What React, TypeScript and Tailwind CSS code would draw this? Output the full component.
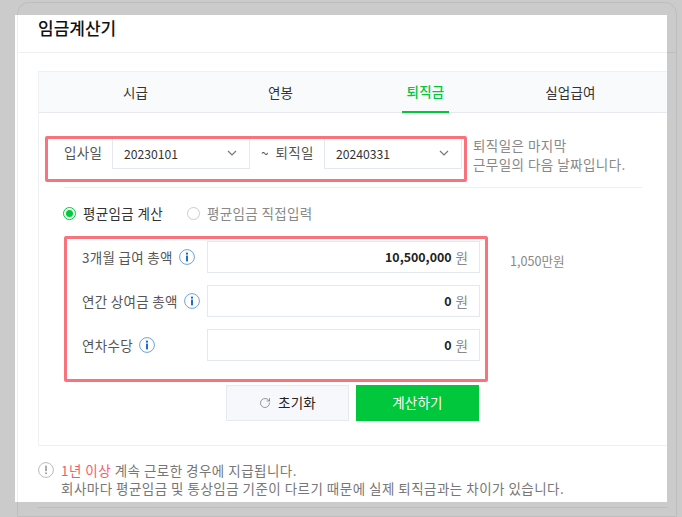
import { RotateCw } from "lucide-react";

const font = "[font-family:'Noto_Sans_CJK_KR','Noto_Sans',sans-serif]";

function Chevron() {
  return (
    <svg width="10" height="6" viewBox="0 0 10 6" fill="none" className="shrink-0">
      <path d="M1 1l4 4 4-4" stroke="#777" strokeWidth="1.2" />
    </svg>
  );
}

function Info() {
  return (
    <svg width="16" height="16" viewBox="0 0 16 16" fill="none" className="ml-[6px] shrink-0">
      <circle cx="8" cy="8" r="7.4" stroke="#6ea3dc" strokeWidth="1" />
      <rect x="7" y="3.6" width="2" height="2" fill="#1f6fc4" />
      <rect x="7" y="6.6" width="2" height="5.8" fill="#1f6fc4" />
    </svg>
  );
}

function Select({ value }: { value: string }) {
  return (
    <div className="flex h-8 w-[138px] items-center justify-between border border-[#e4e8ef] bg-white pl-[11px] pr-3 text-[12.2px] tracking-normal text-[#333]">
      <span className="pt-[2px]">{value}</span>
      <Chevron />
    </div>
  );
}

function Row({ label, value }: { label: string; value: string }) {
  return (
    <div className="flex h-8 items-center">
      <div className="flex w-[143px] items-center pl-[18px] text-[13.5px] tracking-[0.3px] text-[#555]">
        <span>{label}</span>
        <Info />
      </div>
      <div className="flex h-8 w-[273px] items-center justify-end border border-[#e4e8ef] bg-white pr-[11px] text-[12.4px]">
        <span className="font-bold text-[#222]">{value}</span>
        <span className="ml-1 text-[13.5px] text-[#888]">원</span>
      </div>
    </div>
  );
}

export default function App() {
  return (
    <div className={"relative h-[517px] w-[682px] overflow-hidden bg-[#cbcbcb] " + font}>
      {/* dimmed page behind the spotlight */}
      <div className="ml-[17px] mt-[2px] h-[515px] w-[660px] rounded-t-xl border border-[#bebebe]">
        <div className="h-[50px] border-b border-[#bebebe]" />
        <div className="ml-[20px] mt-[454px] w-[630px] border-b border-[#bdbdbd]" />
      </div>

      {/* spotlight panel */}
      <div className="absolute left-[15px] top-[15px] h-[487px] w-[652px] overflow-hidden bg-white">
        <div className="ml-[2px] h-full border-l border-[#eef0f3]">
          <div className="h-[38px] border-b border-[#eef0f3] pl-[20px] text-[17px] font-medium leading-[25px] text-[#111]">
            임금계산기
          </div>
          <div className="ml-[20px] mt-[18px] h-[375px] w-[640px] border border-[#eef0f3]">
            <div className="flex h-[41px] border-b border-[#e6e9f0] bg-[#f9fafc] pl-6">
              {["시급", "연봉", "퇴직금", "실업급여"].map((t) => (
                <div key={t} className="flex w-[145px] justify-center">
                  <div
                    className={
                      "flex h-[41px] items-center px-[5px] pb-[1px] text-[13.5px] tracking-[0.2px] " +
                      (t === "퇴직금"
                        ? "border-b-2 border-[#00c73c] font-medium text-[#00c73c]"
                        : "text-[#333]")
                    }
                  >
                    {t}
                  </div>
                </div>
              ))}
            </div>

            <div className="ml-[25px] mt-6 flex h-8 items-center text-[13.5px] tracking-[0.3px] text-[#555]">
              <span className="w-[48px] pb-[2px]">입사일</span>
              <Select value="20230101" />
              <span className="w-[74px] pb-[2px] pl-[11px]">~&nbsp; 퇴직일</span>
              <Select value="20240331" />
              <div className="ml-[11px] mt-[3px] leading-[19px] tracking-[0.45px] text-[#888]">
                퇴직일은 마지막
                <br />
                근무일의 다음 날짜입니다.
              </div>
            </div>

            <div className="ml-[25px] mt-[18px] w-[578px] border-t border-[#eef0f3]" />

            <div className="ml-[24px] mt-[15px] flex h-5 items-center text-[13.5px] tracking-[0.35px]">
              <span className="flex h-[13px] w-[13px] items-center justify-center rounded-full border border-[#00c73c]">
                <span className="h-[7px] w-[7px] rounded-full bg-[#00c73c]" />
              </span>
              <span className="ml-[7px] w-[79px] whitespace-nowrap text-[#333]">평균임금 계산</span>
              <span className="ml-[25px] h-[13px] w-[13px] rounded-full border border-[#ccc]" />
              <span className="ml-[7px] text-[#888]">평균임금 직접입력</span>
            </div>

            <div className="ml-[25px] mt-[18px] flex w-[416px] flex-col gap-3">
              <Row label="3개월 급여 총액" value="10,500,000" />
              <Row label="연간 상여금 총액" value="0" />
              <Row label="연차수당" value="0" />
            </div>

            <div className="ml-[187px] mt-6 flex gap-[7px] text-[13.5px] tracking-[0.2px]">
              <div className="flex h-9 w-[123px] items-center justify-center gap-[7px] border border-[#e6e9f0] bg-[#f7f8fb] pb-[1px] text-[#222]">
                <RotateCw size={12} color="#777" strokeWidth={1.5} />
                초기화
              </div>
              <div className="flex h-9 w-[123px] items-center justify-center bg-[#00c73c] pb-[1px] text-white">계산하기</div>
            </div>
          </div>

          <div className="ml-[20px] mt-[15px] flex text-[13.5px] leading-[18px] tracking-[0.47px] text-[#777]">
            <svg width="16" height="16" viewBox="0 0 16 16" fill="none" className="mt-[1px] shrink-0">
              <circle cx="8" cy="8" r="7.4" stroke="#bbb" />
              <rect x="7.2" y="3.6" width="1.6" height="5.6" fill="#999" />
              <rect x="7.2" y="10.4" width="1.6" height="1.8" fill="#999" />
            </svg>
            <div className="ml-[7px] whitespace-nowrap">
              <span className="text-[#fa5a6a]">1년 이상</span> 계속 근로한 경우에 지급됩니다.
              <br />
              회사마다 평균임금 및 통상임금 기준이 다르기 때문에 실제 퇴직금과는 차이가 있습니다.
            </div>
          </div>
        </div>
      </div>

      {/* red annotation boxes */}
      <div className="absolute left-[45px] top-[136px] h-[46px] w-[422px] rounded-[2px] border-[3px] border-[#f8737b]" />
      <div className="absolute left-[64px] top-[236px] h-[146px] w-[424px] rounded-[2px] border-[3px] border-[#f8737b]" />

      <div className="absolute left-[510px] top-[252px] text-[12.6px] leading-[18px] text-[#888]">1,050만원</div>
    </div>
  );
}
